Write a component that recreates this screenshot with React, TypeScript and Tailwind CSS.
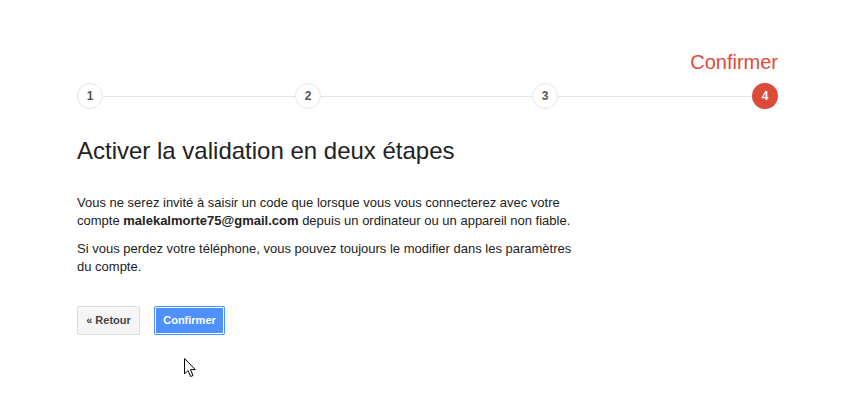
import React from "react";

const steps = [
  { n: 1, line: "w-[192px]" },
  { n: 2, line: "w-[211px]" },
  { n: 3, line: "w-[194px]" },
];

function StepCircle({ n, active }: { n: number; active?: boolean }) {
  return (
    <div
      className={
        active
          ? "flex h-[26px] w-[26px] shrink-0 items-center justify-center rounded-full bg-[#dd4b39] text-[12px] font-bold text-white"
          : "flex h-[26px] w-[26px] shrink-0 items-center justify-center rounded-full border border-[#e5e5e5] bg-white text-[12px] font-bold text-[#555]"
      }
    >
      {n}
    </div>
  );
}

function Cursor() {
  return (
    <svg className="absolute left-[183px] top-[357px]" width="14" height="22" viewBox="0 0 14 22">
      <path
        d="M1.5 1.5 L1.5 17 L5 13.5 L7.6 19.5 L10 18.5 L7.5 12.6 L12.3 12.6 Z"
        fill="#fff"
        stroke="#000"
        strokeWidth="1"
        strokeLinejoin="miter"
      />
    </svg>
  );
}

export default function App() {
  return (
    <div className="relative min-h-[406px] w-[849px] bg-white font-['Liberation_Sans',Arial,sans-serif] text-[#222]">
      <div className="w-[701px] pl-0 pt-[50px] ml-[77px]">
        <div className="flex justify-end text-[20px] leading-[24px] text-[#dd4b39]">Confirmer</div>

        <div className="mt-[9px] flex items-center">
          {steps.map((s) => (
            <React.Fragment key={s.n}>
              <StepCircle n={s.n} />
              <div className={`h-px bg-[#e5e5e5] ${s.line}`} />
            </React.Fragment>
          ))}
          <StepCircle n={4} active />
        </div>

        <h1 className="mt-[28px] text-[24px] font-normal leading-[28px] text-[#222]">
          Activer la validation en deux étapes
        </h1>

        <div className="mt-[29px] w-[500px] text-[13px] leading-[18px]">
          <p>
            Vous ne serez invité à saisir un code que lorsque vous vous connecterez avec votre compte{" "}
            <b>malekalmorte75@gmail.com</b> depuis un ordinateur ou un appareil non fiable.
          </p>
          <p className="mt-[10px]">
            Si vous perdez votre téléphone, vous pouvez toujours le modifier dans les paramètres du compte.
          </p>
        </div>

        <div className="mt-[30px] flex gap-[14px]">
          <button
            className="h-[29px] w-[63px] rounded-[2px] border border-[#dcdcdc] bg-[#f5f5f5] text-[11px] font-bold text-[#444]"
            type="button"
          >
            « Retour
          </button>
          <button
            className="h-[29px] w-[71px] rounded-[2px] border border-[#4d90fe] bg-[#4d90fe] text-[11px] font-bold text-white shadow-[inset_0_0_0_1px_#fff]"
            type="button"
          >
            Confirmer
          </button>
        </div>
      </div>
      <Cursor />
    </div>
  );
}
